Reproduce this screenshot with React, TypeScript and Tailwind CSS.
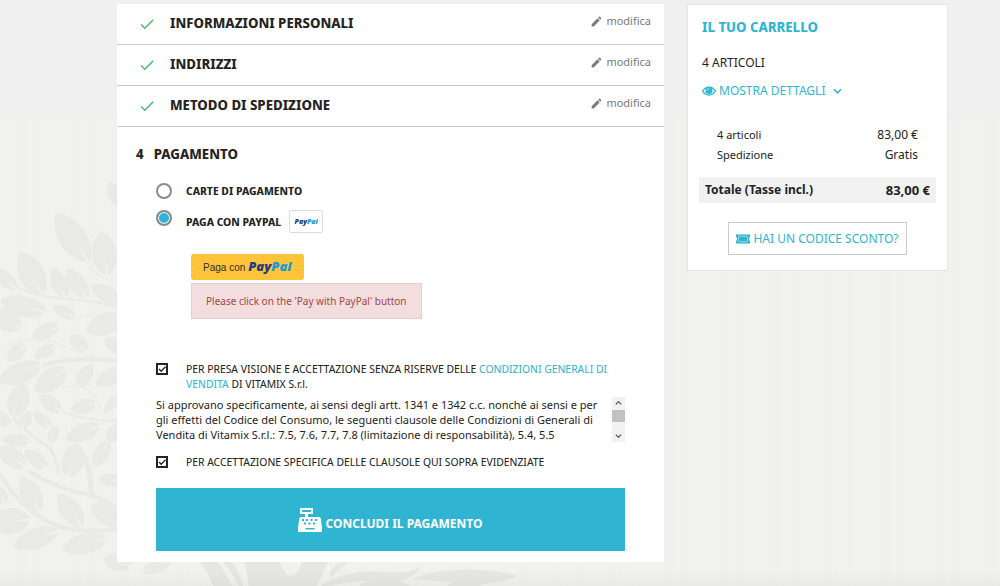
import { useState } from "react";
import { MdDone, MdEdit } from "react-icons/md";

type Leaf = [number, number, number, number, number];

const leaves: Leaf[] = [
  [56, 213, 89, 262, 27], [101, 231, 108, 276, 25], [20, 252, 43, 295, 25], [53, 268, 66, 299, 16],
  [67, 269, 88, 299, 17], [-8, 268, 18, 290, 14], [0, 300, 47, 312, 20], [53, 306, 77, 318, 12],
  [90, 285, 124, 303, 16], [-8, 312, 21, 328, 22], [32, 337, 59, 326, 15], [86, 332, 124, 316, 22],
  [7, 361, 26, 344, 14], [34, 358, 56, 345, 12], [70, 335, 88, 352, 14], [105, 338, 124, 352, 14],
  [-2, 382, 42, 364, 21], [35, 392, 66, 368, 21], [92, 364, 78, 388, 14], [95, 384, 126, 370, 17],
  [24, 383, 13, 417, 21], [39, 395, 62, 412, 14], [70, 411, 97, 402, 14], [30, 411, 22, 429, 11],
  [33, 413, 52, 427, 12], [105, 412, 119, 395, 10], [-6, 412, 11, 426, 12], [2, 440, 31, 440, 13],
  [65, 440, 101, 425, 17], [-2, 447, 26, 467, 18], [24, 450, 48, 468, 14], [78, 443, 68, 478, 22],
  [57, 425, 49, 445, 10], [94, 467, 109, 440, 15], [22, 477, 40, 512, 20], [58, 494, 83, 527, 20],
  [98, 478, 122, 482, 13], [91, 504, 124, 528, 18], [-14, 524, 31, 519, 26], [13, 547, 59, 530, 20],
  [62, 550, 108, 537, 20], [103, 558, 132, 566, 18], [109, 182, 124, 208, 16], [106, 440, 124, 426, 16],
  [142, 572, 172, 560, 14], [-6, 486, 6, 504, 14],
];

const stems = [
  ["M20 289 Q45 298 66 299 Q95 300 124 309", 2],
  ["M77 318 Q92 316 104 308 L122 303", 1],
  ["M88 268 Q104 279 120 286", 1],
  ["M0 348 Q40 332 68 348 Q90 360 124 360", 1],
  ["M42 366 Q70 355 124 361", 4],
  ["M62 388 Q80 382 95 395 Q102 420 124 422", 1],
  ["M60 411 Q85 421 124 422", 2],
  ["M13 417 Q35 440 50 448 Q58 462 58 474", 3],
  ["M28 471 Q60 490 90 495 Q108 500 124 514", 4],
  ["M76 444 Q90 460 91 490 Q96 505 124 508", 5],
  ["M0 474 Q28 520 68 529 Q95 532 124 529", 4],
] as const;

function leafPath([tx, ty, bx, by, w]: Leaf) {
  const dx = bx - tx;
  const dy = by - ty;
  const len = Math.hypot(dx, dy);
  const nx = (-dy / len) * w * 0.68;
  const ny = (dx / len) * w * 0.68;
  const p = (t: number, s: number) => `${tx + dx * t + nx * s} ${ty + dy * t + ny * s}`;
  return `M${tx} ${ty}C${p(0.25, 1)} ${p(0.8, 1)} ${bx} ${by}C${p(0.8, -1)} ${p(0.25, -1)} ${tx} ${ty}Z`;
}

function veinPath([tx, ty, bx, by]: Leaf) {
  const dx = bx - tx;
  const dy = by - ty;
  const len = Math.hypot(dx, dy);
  const nx = (-dy / len) * 2;
  const ny = (dx / len) * 2;
  return `M${tx + dx * 0.58} ${ty + dy * 0.58}L${bx + nx} ${by + ny}L${bx - nx * 0.4} ${by - ny * 0.4}Z`;
}

function Backdrop() {
  return (
    <div aria-hidden="true" className="absolute inset-0 -z-10 overflow-hidden bg-[#f0f0f0]">
      <svg className="h-full w-full">
        <defs>
          <pattern id="grain" width="54" height="40" patternUnits="userSpaceOnUse">
            <rect width="54" height="40" fill="#f1f1ef" />
            <path d="M17 0h5v40h-5zM36 0h4v40h-4z" fill="#f0f0ee" />
            <path d="M28 0h3v40h-3z" fill="#f2f2f0" />
          </pattern>
        </defs>
        <rect y="117" width="100%" height="100%" fill="url(#grain)" />
        {stems.map(([d, w]) => (
          <path key={d} d={d} fill="none" stroke="#e9e9e8" strokeWidth={w} />
        ))}
        {leaves.map((leaf) => (
          <g key={leaf.join()}>
            <path d={leafPath(leaf)} fill="#e9e9e8" />
            <path d={veinPath(leaf)} fill="#f1f1ef" />
          </g>
        ))}
        <path d="M199 560h18q9 14 18 30h-20q-6-16-16-30zM221 560h10q9 12 13 30h-4q-6-16-19-30zM243 560h36q6 16 12 16t12-16h26q-6 12-14 30h-66q-1-16-6-30z" fill="#e6e6e5" />
        <path d="M330 572q6-10 22-14-8 8-22 20zM322 584q30-16 64-12 24 2 36-6-10 16-34 16-30-4-66 6zM360 584q22-8 40-3 6 3 14 6h-54zM410 580q22-10 46-10 30-2 62 6-26 10-50 8-30-4-58-4zM448 584q20-6 40 4h-40z" fill="#e6e6e5" />
      </svg>
      <div className="absolute inset-x-0 bottom-0 h-4 bg-linear-to-b from-transparent to-black/3" />
    </div>
  );
}

function EyeIcon() {
  return (
    <svg viewBox="0 0 14 10" className="h-[10px] w-[14px]" fill="none" aria-hidden="true">
      <path d="M.7 5C3.6-.3 10.4-.3 13.3 5 10.4 10.3 3.6 10.3.7 5Z" stroke="currentColor" strokeWidth="1.3" />
      <circle cx="7" cy="4.4" r="3.5" fill="currentColor" />
      <path d="M5.3 4.4A1.8 1.8 0 0 1 7 2.7" stroke="#fff" strokeWidth=".7" />
    </svg>
  );
}

function TicketIcon() {
  return (
    <svg viewBox="0 0 14 10" className="h-[10px] w-[14px]" aria-hidden="true">
      <path d="M0 .5h14v2.500a1 2 0 0 0 0 4v2.500H0V7a1 2 0 0 0 0-4Z" fill="currentColor" />
      <rect x="2.500" y="2.300" width="9" height="5.400" rx=".8" fill="none" stroke="#fff" strokeOpacity=".7" strokeWidth=".7" />
    </svg>
  );
}

function RegisterIcon() {
  return (
    <svg viewBox="0 0 24 24" className="h-6 w-6" aria-hidden="true">
      <path
        fill="currentColor"
        fillRule="evenodd"
        d="M2 0h13v6h-5v3h11q1.500 0 1.800 1.500L24 20v4H0v-4l1.200-9.500Q1.500 9 3 9h4V6H2ZM4 2v2h9V2ZM4 11v2h2v-2Zm4 0v2h2v-2Zm4.500 0v2h2v-2Zm4.500 0v2h2v-2ZM6 14.500v2h2v-2Zm4.500 0v2h2v-2Zm4.500 0v2h2v-2ZM7.500 20v1.500h9V20Z"
      />
    </svg>
  );
}

function Chevron({ up = false, className }: { up?: boolean; className: string }) {
  return (
    <svg viewBox="0 0 10 6" className={className} fill="none" stroke="currentColor" strokeWidth="1.800" aria-hidden="true">
      <path d={up ? "M1 5l4-4 4 4" : "M1 1l4 4 4-4"} />
    </svg>
  );
}

function PayPalWordmark({ className }: { className: string }) {
  return (
    <span className={`font-['Open_Sans',sans-serif] font-extrabold italic ${className}`}>
      <span className="text-[#253b80]">Pay</span>
      <span className="text-[#179bd7]">Pal</span>
    </span>
  );
}

function DoneStep({ title }: { title: string }) {
  return (
    <section className="flex h-[41px] items-start border-b border-[#ccc] pr-[13px] pl-[21px]">
      <MdDone className="mt-[11px] h-[18px] w-[18px] text-[#4cbb6c]" aria-hidden="true" />
      <h2 className="mt-[9px] ml-[14px] flex-1 text-[14px] leading-5 font-bold">{title}</h2>
      <button type="button" className="mt-[9px] flex items-center gap-[3px] font-['Noto_Sans',sans-serif] text-[11px] leading-4 text-[#7a7a7a]">
        <MdEdit className="h-[13px] w-[13px]" aria-hidden="true" />
        modifica
      </button>
    </section>
  );
}

const radioClass =
  "h-4 w-4 appearance-none rounded-full border-2 border-[#8a8a8a] bg-white checked:bg-[#2fb5d2] checked:shadow-[inset_0_0_0_1px_#fff]";

function Tick({ id }: { id: string }) {
  const [checked, setChecked] = useState(true);
  return (
    <span className="mt-[2px] grid h-3 w-3 shrink-0">
      <input
        id={id}
        type="checkbox"
        checked={checked}
        onChange={() => setChecked(!checked)}
        className="col-start-1 row-start-1 h-3 w-3 appearance-none border-2 border-[#232323] bg-white"
      />
      {checked && (
        <svg viewBox="0 0 12 12" className="pointer-events-none col-start-1 row-start-1 h-3 w-3" fill="none" stroke="#232323" strokeWidth="1.300" aria-hidden="true">
          <path d="M3 6l2.200 2.300L9.500 3.700" />
        </svg>
      )}
    </span>
  );
}

function Checkout() {
  const [method, setMethod] = useState("paypal");
  return (
    <main className="bg-white font-['Noto_Sans_Display','Noto_Sans',sans-serif]">
      <DoneStep title="INFORMAZIONI PERSONALI" />
      <DoneStep title="INDIRIZZI" />
      <DoneStep title="METODO DI SPEDIZIONE" />
      <section className="pt-[17px] pr-[39px] pb-[11px] pl-[39px]">
        <h2 className="-ml-5 flex gap-[10px] text-[14px] leading-5 font-bold">
          <span>4</span>
          <span>PAGAMENTO</span>
        </h2>

        <div className="mt-[19px] flex items-center gap-[14px]">
          <input id="card" type="radio" name="method" checked={method === "card"} onChange={() => setMethod("card")} className={radioClass} />
          <label htmlFor="card" className="text-[11px] leading-4 font-bold">CARTE DI PAGAMENTO</label>
        </div>
        <div className="mt-[11px] flex gap-[14px]">
          <input id="paypal" type="radio" name="method" checked={method === "paypal"} onChange={() => setMethod("paypal")} className={radioClass} />
          <label htmlFor="paypal" className="flex items-center gap-2 text-[11px] leading-4 font-bold">
            PAGA CON PAYPAL
            <span className="flex h-[23px] w-[34px] items-center justify-center rounded-xs border border-[#ddd]">
              <PayPalWordmark className="text-[7px]" />
            </span>
          </label>
        </div>

        <div className="mt-[21px] flex flex-col items-start gap-[3px] pl-[35px]">
          <button type="button" className="flex h-[26px] items-center gap-[3px] rounded-[3px] bg-[#ffc439] px-3 font-['Liberation_Sans',sans-serif] text-[10px] text-[#2c2e2f]">
            Paga con
            <PayPalWordmark className="text-[13px]" />
          </button>
          <p role="alert" className="border border-[#ebcccc] bg-[#f2dede] px-[14px] py-[9px] font-['Noto_Sans',sans-serif] text-[10px] leading-4 text-[#a94442]">
            Please click on the 'Pay with PayPal' button
          </p>
        </div>

        <div className="mt-[42px] flex items-start gap-[18px] text-[11px] leading-[15px]">
          <Tick id="terms" />
          <label htmlFor="terms">
            PER PRESA VISIONE E ACCETTAZIONE SENZA RISERVE DELLE{" "}
            <a href="#condizioni" className="text-[#2fb5d2]">CONDIZIONI GENERALI DI VENDITA</a> DI VITAMIX S.r.l.
          </label>
        </div>

        <div className="mt-[6px] flex gap-1">
          <p className="flex-1 font-['Noto_Sans',sans-serif] text-[11px] leading-[15px]">
            Si approvano specificamente, ai sensi degli artt. 1341 e 1342 c.c. nonché ai sensi e per gli effetti del Codice del Consumo, le
            seguenti clausole delle Condizioni di Generali di Vendita di Vitamix S.r.l.: 7.5, 7.6, 7.7, 7.8 (limitazione di responsabilità), 5.4, 5.5
          </p>
          <div aria-hidden="true" className="flex w-[13px] flex-col items-center bg-[#f1f1f1] py-1 text-[#505050]">
            <Chevron up className="h-1 w-[7px]" />
            <span className="mt-[5px] h-3 w-full bg-[#c1c1c1]" />
            <Chevron className="mt-auto h-1 w-[7px]" />
          </div>
        </div>

        <div className="mt-3 flex items-start gap-[18px] text-[11px] leading-[15px]">
          <Tick id="clauses" />
          <label htmlFor="clauses">PER ACCETTAZIONE SPECIFICA DELLE CLAUSOLE QUI SOPRA EVIDENZIATE</label>
        </div>

        <button type="button" className="mt-[19px] flex h-[63px] w-full items-center justify-center gap-[3px] bg-[#2fb5d2] font-['Noto_Sans',sans-serif] text-[12px] font-bold text-white">
          <RegisterIcon />
          <span className="mt-2">CONCLUDI IL PAGAMENTO</span>
        </button>
      </section>
    </main>
  );
}

function Cart() {
  return (
    <aside className="border border-[#e5e5e5] bg-white px-[11px] pt-3 pb-[15px]">
      <div className="px-[3px]">
        <h2 className="font-['Noto_Sans_Display','Noto_Sans',sans-serif] text-[14px] leading-5 font-bold text-[#2fb5d2]">IL TUO CARRELLO</h2>
        <p className="mt-[17px] text-[12px] leading-[18px]">4 ARTICOLI</p>
        <button type="button" className="mt-[10px] flex items-center gap-[3px] text-[12px] leading-[18px] text-[#2fb5d2]">
          <EyeIcon />
          MOSTRA DETTAGLI
          <Chevron className="ml-[5px] h-[6px] w-[9px]" />
        </button>
      </div>
      <dl className="mt-[25px]">
        <div className="flex justify-between px-[18px] leading-5">
          <dt className="text-[11px]">4 articoli</dt>
          <dd className="text-[12px]">83,00 €</dd>
        </div>
        <div className="flex justify-between px-[18px] leading-5">
          <dt className="text-[11px]">Spedizione</dt>
          <dd className="text-[12px]">Gratis</dd>
        </div>
        <div className="mt-3 flex justify-between bg-[#f1f1f1] px-[6px] py-1 leading-[18px] font-bold">
          <dt className="text-[12px]">Totale (Tasse incl.)</dt>
          <dd className="text-[13px]">83,00 €</dd>
        </div>
      </dl>
      <button type="button" className="mx-auto mt-[19px] flex h-[33px] items-center gap-[3px] border border-[#ccc] px-[7px] text-[12px] text-[#2fb5d2]">
        <TicketIcon />
        HAI UN CODICE SCONTO?
      </button>
    </aside>
  );
}

export default function App() {
  return (
    <div className="relative isolate min-h-screen pb-6 font-['Noto_Sans',sans-serif] text-[#232323]">
      <Backdrop />
      <div className="grid grid-cols-[547fr_261fr] items-start gap-[23px] pt-1 pr-[52px] pl-[117px]">
        <Checkout />
        <Cart />
      </div>
    </div>
  );
}
